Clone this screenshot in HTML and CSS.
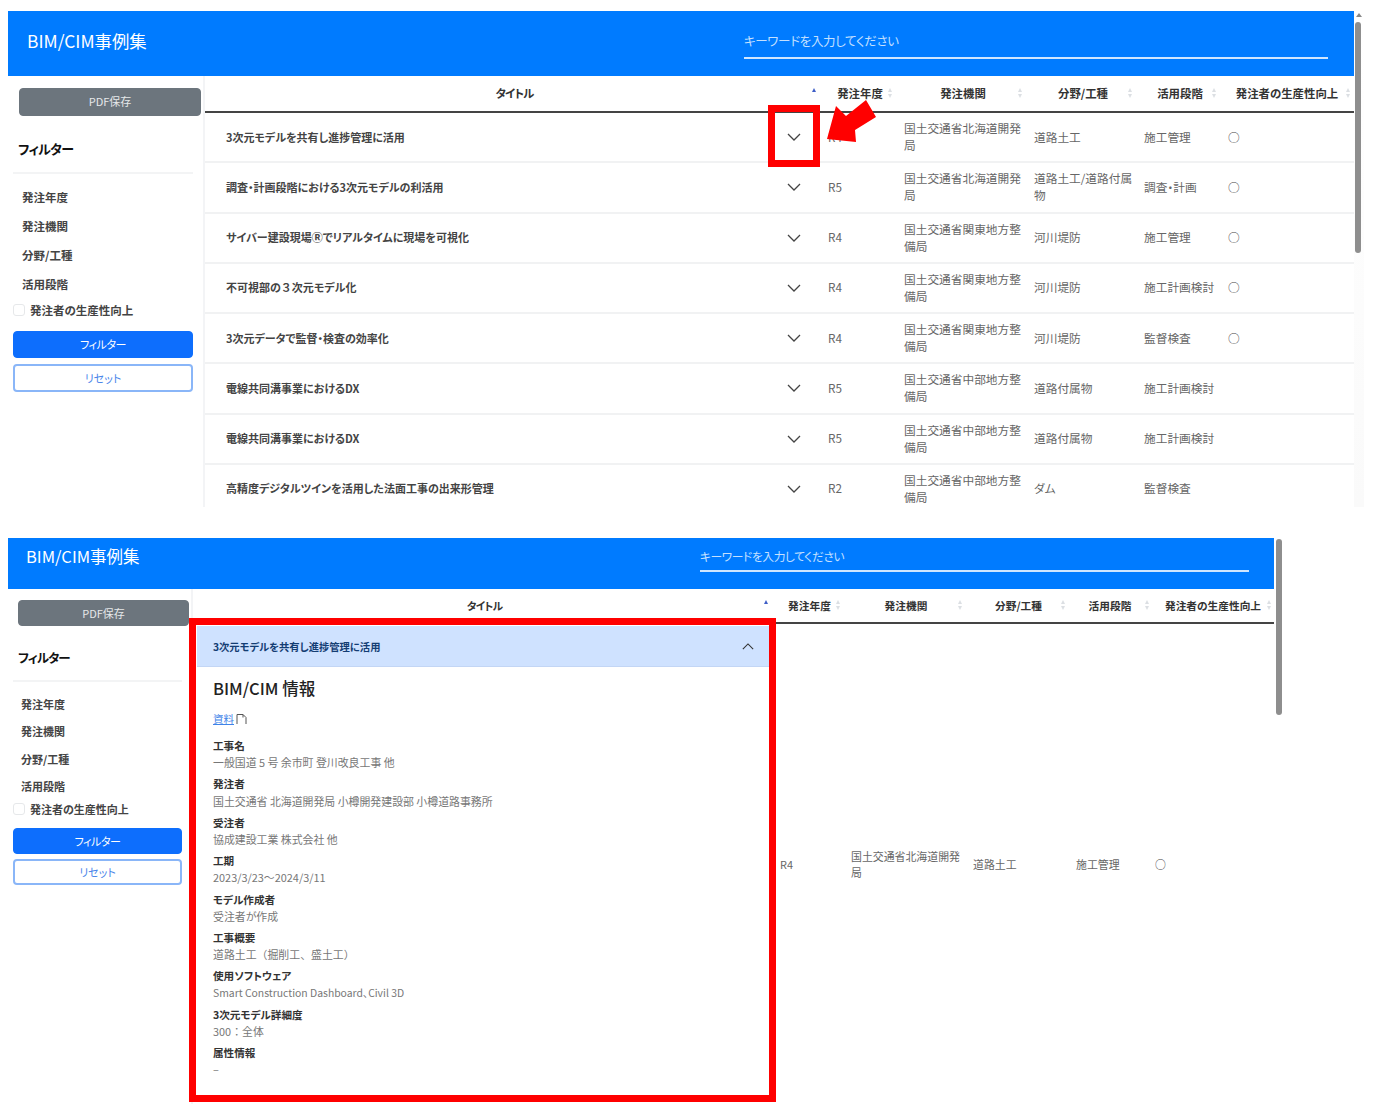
FILE: index.html
```html
<!DOCTYPE html>
<html lang="ja">
<head>
<meta charset="utf-8">
<title>BIM/CIM事例集</title>
<link rel="stylesheet" href="styles.css">
</head>
<body>
<main class="page">

<section class="shot shot-list">
  <div class="panel">
    <header class="topbar">
      <div class="brand">BIM/CIM事例集</div>
      <input class="search" type="text" placeholder="キーワードを入力してください">
    </header>
    <div class="body">
      <aside class="side">
        <button class="btn btn-pdf">PDF保存</button>
        <h2 class="side-title">フィルター</h2>
        <hr class="side-rule">
        <div class="facet">発注年度</div>
        <div class="facet">発注機関</div>
        <div class="facet">分野/工種</div>
        <div class="facet">活用段階</div>
        <label class="check"><span class="box"></span>発注者の生産性向上</label>
        <button class="btn btn-filter">フィルター</button>
        <button class="btn btn-reset">リセット</button>
      </aside>
      <table class="grid">
        <colgroup><col class="c1"><col class="c2"><col class="c3"><col class="c4"><col class="c5"><col class="c6"></colgroup>
        <thead>
          <tr>
            <th>タイトル<span class="sort sort-active"><i class="up"></i><i class="down"></i></span></th>
            <th>発注年度<span class="sort"><i class="up"></i><i class="down"></i></span></th>
            <th>発注機関<span class="sort"><i class="up"></i><i class="down"></i></span></th>
            <th>分野/工種<span class="sort"><i class="up"></i><i class="down"></i></span></th>
            <th>活用段階<span class="sort"><i class="up"></i><i class="down"></i></span></th>
            <th>発注者の生産性向上<span class="sort"><i class="up"></i><i class="down"></i></span></th>
          </tr>
        </thead>
        <tbody>
          <tr>
            <td class="title-cell"><div class="title-row"><span>3次元モデルを共有し進捗管理に活用</span><svg class="chev" viewBox="0 0 14 8"><path d="M1 1l6 6 6-6"/></svg></div></td>
            <td>R4</td><td>国土交通省北海道開発局</td><td>道路土工</td><td>施工管理</td><td>○</td>
          </tr>
          <tr>
            <td class="title-cell"><div class="title-row"><span>調査・計画段階における3次元モデルの利活用</span><svg class="chev" viewBox="0 0 14 8"><path d="M1 1l6 6 6-6"/></svg></div></td>
            <td>R5</td><td>国土交通省北海道開発局</td><td>道路土工/道路付属物</td><td>調査・計画</td><td>○</td>
          </tr>
          <tr>
            <td class="title-cell"><div class="title-row"><span>サイバー建設現場Ⓡでリアルタイムに現場を可視化</span><svg class="chev" viewBox="0 0 14 8"><path d="M1 1l6 6 6-6"/></svg></div></td>
            <td>R4</td><td>国土交通省関東地方整備局</td><td>河川堤防</td><td>施工管理</td><td>○</td>
          </tr>
          <tr>
            <td class="title-cell"><div class="title-row"><span>不可視部の<span class="full">３</span>次元モデル化</span><svg class="chev" viewBox="0 0 14 8"><path d="M1 1l6 6 6-6"/></svg></div></td>
            <td>R4</td><td>国土交通省関東地方整備局</td><td>河川堤防</td><td>施工計画検討</td><td>○</td>
          </tr>
          <tr>
            <td class="title-cell"><div class="title-row"><span>3次元データで監督・検査の効率化</span><svg class="chev" viewBox="0 0 14 8"><path d="M1 1l6 6 6-6"/></svg></div></td>
            <td>R4</td><td>国土交通省関東地方整備局</td><td>河川堤防</td><td>監督検査</td><td>○</td>
          </tr>
          <tr>
            <td class="title-cell"><div class="title-row"><span>電線共同溝事業におけるDX</span><svg class="chev" viewBox="0 0 14 8"><path d="M1 1l6 6 6-6"/></svg></div></td>
            <td>R5</td><td>国土交通省中部地方整備局</td><td>道路付属物</td><td>施工計画検討</td><td></td>
          </tr>
          <tr>
            <td class="title-cell"><div class="title-row"><span>電線共同溝事業におけるDX</span><svg class="chev" viewBox="0 0 14 8"><path d="M1 1l6 6 6-6"/></svg></div></td>
            <td>R5</td><td>国土交通省中部地方整備局</td><td>道路付属物</td><td>施工計画検討</td><td></td>
          </tr>
          <tr>
            <td class="title-cell"><div class="title-row"><span>高精度デジタルツインを活用した法面工事の出来形管理</span><svg class="chev" viewBox="0 0 14 8"><path d="M1 1l6 6 6-6"/></svg></div></td>
            <td>R2</td><td>国土交通省中部地方整備局</td><td>ダム</td><td>監督検査</td><td></td>
          </tr>
        </tbody>
      </table>
    </div>
  </div>
  <div class="scroll"><i class="scroll-up"></i><i class="thumb"></i></div>
  <div class="marker"></div>
  <svg class="arrow" viewBox="0 0 54 46"><polygon points="0,39 9,6 19,16 39,0 49,17 28,30 29,42"/></svg>
</section>

<section class="shot shot-detail">
  <div class="panel">
    <header class="topbar">
      <div class="brand">BIM/CIM事例集</div>
      <input class="search" type="text" placeholder="キーワードを入力してください">
    </header>
    <div class="body">
      <aside class="side">
        <button class="btn btn-pdf">PDF保存</button>
        <h2 class="side-title">フィルター</h2>
        <hr class="side-rule">
        <div class="facet">発注年度</div>
        <div class="facet">発注機関</div>
        <div class="facet">分野/工種</div>
        <div class="facet">活用段階</div>
        <label class="check"><span class="box"></span>発注者の生産性向上</label>
        <button class="btn btn-filter">フィルター</button>
        <button class="btn btn-reset">リセット</button>
      </aside>
      <table class="grid">
        <colgroup><col class="c1"><col class="c2"><col class="c3"><col class="c4"><col class="c5"><col class="c6"></colgroup>
        <thead>
          <tr>
            <th>タイトル<span class="sort sort-active"><i class="up"></i><i class="down"></i></span></th>
            <th>発注年度<span class="sort"><i class="up"></i><i class="down"></i></span></th>
            <th>発注機関<span class="sort"><i class="up"></i><i class="down"></i></span></th>
            <th>分野/工種<span class="sort"><i class="up"></i><i class="down"></i></span></th>
            <th>活用段階<span class="sort"><i class="up"></i><i class="down"></i></span></th>
            <th>発注者の生産性向上<span class="sort"><i class="up"></i><i class="down"></i></span></th>
          </tr>
        </thead>
        <tbody>
          <tr class="open-row">
            <td class="accordion-cell">
              <div class="acc-head"><span>3次元モデルを共有し進捗管理に活用</span><svg class="chev" viewBox="0 0 14 8"><path d="M1 7l6-6 6 6"/></svg></div>
              <div class="acc-body">
                <h3 class="info-title">BIM/CIM 情報</h3>
                <p class="doc"><a href="#">資料</a><svg class="doc-icon" viewBox="0 0 11 12"><path d="M1 11V1.5h6L10 4.5V11M7 1.5V4.5"/></svg></p>
                <dl class="info">
                  <dt>工事名</dt><dd>一般国道 <span class="full">5</span> 号 余市町 登川改良工事 他</dd>
                  <dt>発注者</dt><dd>国土交通省 北海道開発局 小樽開発建設部 小樽道路事務所</dd>
                  <dt>受注者</dt><dd>協成建設工業 株式会社 他</dd>
                  <dt>工期</dt><dd>2023/3/23～2024/3/11</dd>
                  <dt>モデル作成者</dt><dd>受注者が作成</dd>
                  <dt>工事概要</dt><dd class="plain">道路土工（掘削工、盛土工）</dd>
                  <dt>使用ソフトウェア</dt><dd class="tight">Smart Construction Dashboard、Civil 3D</dd>
                  <dt>3次元モデル詳細度</dt><dd class="plain">300：全体</dd>
                  <dt>属性情報</dt><dd>–</dd>
                </dl>
              </div>
            </td>
            <td>R4</td><td>国土交通省北海道開発局</td><td>道路土工</td><td>施工管理</td><td>○</td>
          </tr>
        </tbody>
      </table>
    </div>
  </div>
  <div class="scroll"><i class="thumb"></i></div>
  <div class="marker"></div>
</section>

</main>
</body>
</html>
```

FILE: styles.css
```css
* { box-sizing: border-box; }
html, body { margin: 0; padding: 0; background: #fff; }
body {
  font-family: "Noto Sans CJK JP", "Noto Sans", sans-serif;
  font-feature-settings: "palt";
  color: #444;
}
.page { height: 1113px; overflow: hidden; padding: 11px 0 0 8px; }
.full { font-feature-settings: normal; }

.shot { position: relative; display: flex; overflow: hidden; }
.shot-list { height: 496px; width: 1358px; margin-bottom: 31px; }
.shot-detail { height: 575px; width: 1276px; }
.shot-list .panel { width: 1346px; }
.shot-detail .panel { width: 1266px; }
.panel { flex: none; }

/* top bar */
.topbar { display: flex; align-items: flex-start; background: #007bff; color: #fff; }
.shot-list .topbar { height: 65px; }
.shot-detail .topbar { height: 51px; }
.brand { line-height: 26px; flex: none; }
.shot-list .brand { width: 736px; padding: 17px 0 0 19px; font-size: 17.4px; }
.shot-detail .brand { width: 692px; padding: 5px 0 0 18px; font-size: 16.5px; }
.search {
  display: block;
  flex: none;
  background: transparent;
  border: 0;
  border-bottom: 2px solid #cfe6ff;
  border-radius: 0;
  outline: 0;
  padding: 0 0 6px;
  font: inherit;
  font-feature-settings: "palt";
  color: #fff;
}
.search::placeholder { color: #c5e0ff; opacity: 1; }
.shot-list .search { width: 584px; height: 30px; margin-top: 18px; font-size: 12.5px; letter-spacing: -0.33px; }
.shot-detail .search { width: 549px; height: 26px; margin-top: 8px; padding-bottom: 5px; font-size: 11.8px; letter-spacing: -0.45px; }

/* layout */
.body { display: flex; align-items: flex-start; }

/* sidebar */
.side { flex: none; display: flex; flex-direction: column; align-items: flex-start; padding-left: 5px; align-self: stretch; border-right: 2px solid #f3f4f6; }
.shot-list .side { width: 197px; padding-top: 12px; min-height: 430px; }
.shot-detail .side { width: 185px; padding-top: 11px; }
.btn { display: block; font: inherit; font-feature-settings: "palt"; font-size: 11px; border-radius: 4px; padding: 0; color: #fff; }
.btn-pdf { background: #6c757d; border: 1px solid #6c757d; color: #e6e8ea; }
.btn-filter { background: #0d6efd; border: 1px solid #0d6efd; letter-spacing: -0.5px; }
.btn-reset { background: #fff; border: 2px solid #8ab6f8; color: #4a86ea; }
.side-title { margin: 0; line-height: 20px; font-weight: 700; color: #111; }
.side-rule { border: 0; border-top: 2px solid #f3f4f5; margin: 0; }
.facet { font-size: 11.5px; line-height: 20px; font-weight: 700; color: #444; margin-left: 9px; }
.check { display: flex; align-items: center; font-size: 11.5px; line-height: 20px; font-weight: 700; color: #444; }
.box { width: 12px; height: 12px; border: 1px solid #e6e8ea; border-radius: 3px; margin-right: 5px; background: #fff; }

.shot-list .btn-pdf { width: 182px; height: 28px; margin-left: 6px; padding-bottom: 2px; }
.shot-list .side-title { margin: 23px 0 0 5px; font-size: 13px; letter-spacing: -0.7px; }
.shot-list .side-rule { width: 180px; margin-top: 13px; margin-bottom: 13px; }
.shot-list .facet { margin-bottom: 9px; }
.shot-list .facet:nth-of-type(4) { margin-bottom: 0; }
.shot-list .check { margin-top: 6px; }
.shot-list .btn-filter { width: 180px; height: 27px; margin-top: 10.5px; }
.shot-list .btn-reset { width: 180px; height: 28px; margin-top: 6px; }

.shot-detail .btn-pdf { width: 171px; height: 26px; margin-left: 5px; }
.shot-detail .side-title { margin: 22px 0 0 5px; font-size: 12.5px; letter-spacing: -1px; }
.shot-detail .side-rule { width: 169px; margin-top: 12px; margin-bottom: 12px; }
.shot-detail .facet { margin-bottom: 7.3px; font-size: 11px; margin-left: 8px; }
.shot-detail .check { margin-top: -4px; font-size: 11px; }
.shot-detail .btn-filter { width: 169px; height: 26px; margin-top: 9px; }
.shot-detail .btn-reset { width: 169px; height: 26px; margin-top: 5px; }

/* table */
.grid { flex: none; table-layout: fixed; border-collapse: separate; border-spacing: 0; }
.shot-list .grid { width: 1149px; font-size: 11.7px; line-height: 17px; }
.shot-detail .grid { width: 1081px; font-size: 10.9px; line-height: 16px; }
.shot-list .c1 { width: 615px; } .shot-list .c2 { width: 76px; } .shot-list .c3 { width: 130px; }
.shot-list .c4 { width: 110px; } .shot-list .c5 { width: 84px; } .shot-list .c6 { width: 134px; }
.shot-detail .c1 { width: 579px; } .shot-detail .c2 { width: 71px; } .shot-detail .c3 { width: 122px; }
.shot-detail .c4 { width: 103px; } .shot-detail .c5 { width: 84px; } .shot-detail .c6 { width: 122px; }

.grid th {
  position: relative;
  padding: 0 0 0 4px;
  font-weight: 700;
  color: #333;
  text-align: center;
  border-bottom: 2px solid #444;
  white-space: nowrap;
}
.grid th:first-child { letter-spacing: -0.8px; }
.grid th:last-child { padding-left: 0; }
.shot-detail .grid th:nth-child(5) { padding-left: 0; }
.shot-list .grid th { height: 37px; font-size: 11.4px; }
.shot-detail .grid th { height: 35px; font-size: 10.7px; }
.grid td {
  padding: 0 0 0 8px;
  color: #666;
  vertical-align: middle;
  border-bottom: 2px solid #f1f2f3;
}
.grid td:last-child { color: #444; }
.shot-detail .grid td:last-child { padding-left: 3px; }
.shot-list .grid td { height: 50.25px; padding-bottom: 2px; }
.shot-list .grid .title-cell { padding: 0 19px 0 21px; }
.title-row { display: flex; align-items: center; justify-content: space-between; font-size: 11px; font-weight: 700; color: #444; }
.chev { display: block; width: 14px; height: 8px; fill: none; stroke: #444; stroke-width: 1.3; }

/* sort marks */
.sort { position: absolute; right: 3px; top: 50%; margin-top: -6px; display: flex; flex-direction: column; gap: 2px; }
.sort i { display: block; width: 0; height: 0; border-left: 2.5px solid transparent; border-right: 2.5px solid transparent; }
.sort .up { border-bottom: 4px solid #dcdfe3; }
.sort .down { border-top: 4px solid #dcdfe3; }
.sort-active .up { border-bottom-color: #3f5fc7; }
.sort-active .down { border-top-color: transparent; }
.shot-list .sort { right: 4px; }
.shot-detail .sort-active { right: 4px; }

/* expanded row */
.grid .accordion-cell { padding: 2px 2px 20px 4px; border-bottom: 0; }
.open-row td { border-bottom: 0; }
.acc-head {
  display: flex; align-items: center; justify-content: space-between;
  height: 41px; padding: 0 16px;
  background: #cfe2ff;
  box-shadow: inset 0 -1px 0 #c3d6f5;
  color: #143d73;
  font-weight: 700;
  font-size: 10.3px;
}
.acc-head .chev { width: 12px; height: 7px; stroke: #333; }
.acc-body { padding: 10px 16px 0; }
.info-title { margin: 0; font-size: 16.5px; line-height: 22px; font-weight: 500; color: #222; }
.doc { display: flex; align-items: center; margin: 12px 0 0; height: 16px; }
.doc a { color: #3f83e8; text-decoration: underline; font-size: 10.5px; }
.doc-icon { width: 11px; height: 12px; margin-left: 2px; fill: none; stroke: #555; stroke-width: 1; }
.info { margin: 11px 0 0; font-size: 10.9px; line-height: 16.2px; }
.info dt { font-weight: 700; color: #333; font-size: 10.6px; }
.info dd { margin: 0 0 6px; color: #777; }
.info .plain { font-feature-settings: normal; }
.info .tight { font-size: 10.4px; }

/* fake scrollbar */
.scroll { flex: none; position: relative; width: 8px; margin-left: 0; }
.shot-list .scroll { width: 10px; background: linear-gradient(#fff, #fafafa); }
.scroll-up { position: absolute; left: 2px; top: 2px; width: 0; height: 0; border-left: 3px solid transparent; border-right: 3px solid transparent; border-bottom: 4px solid #888; }
.thumb { position: absolute; display: block; background: #8e8e8e; border-radius: 3px; width: 6px; }
.shot-list .thumb { left: 1px; top: 11px; height: 231px; }
.shot-detail .thumb { left: 2px; top: 1px; height: 176px; }

/* annotations */
.marker { position: absolute; border: 7px solid #f00; pointer-events: none; }
.shot-list .marker { left: 760px; top: 94px; width: 52px; height: 62px; }
.shot-detail .marker { left: 181px; top: 80px; width: 587px; height: 484px; background: transparent; }
.arrow { position: absolute; left: 819px; top: 89px; width: 54px; height: 46px; fill: #f00; }
```
